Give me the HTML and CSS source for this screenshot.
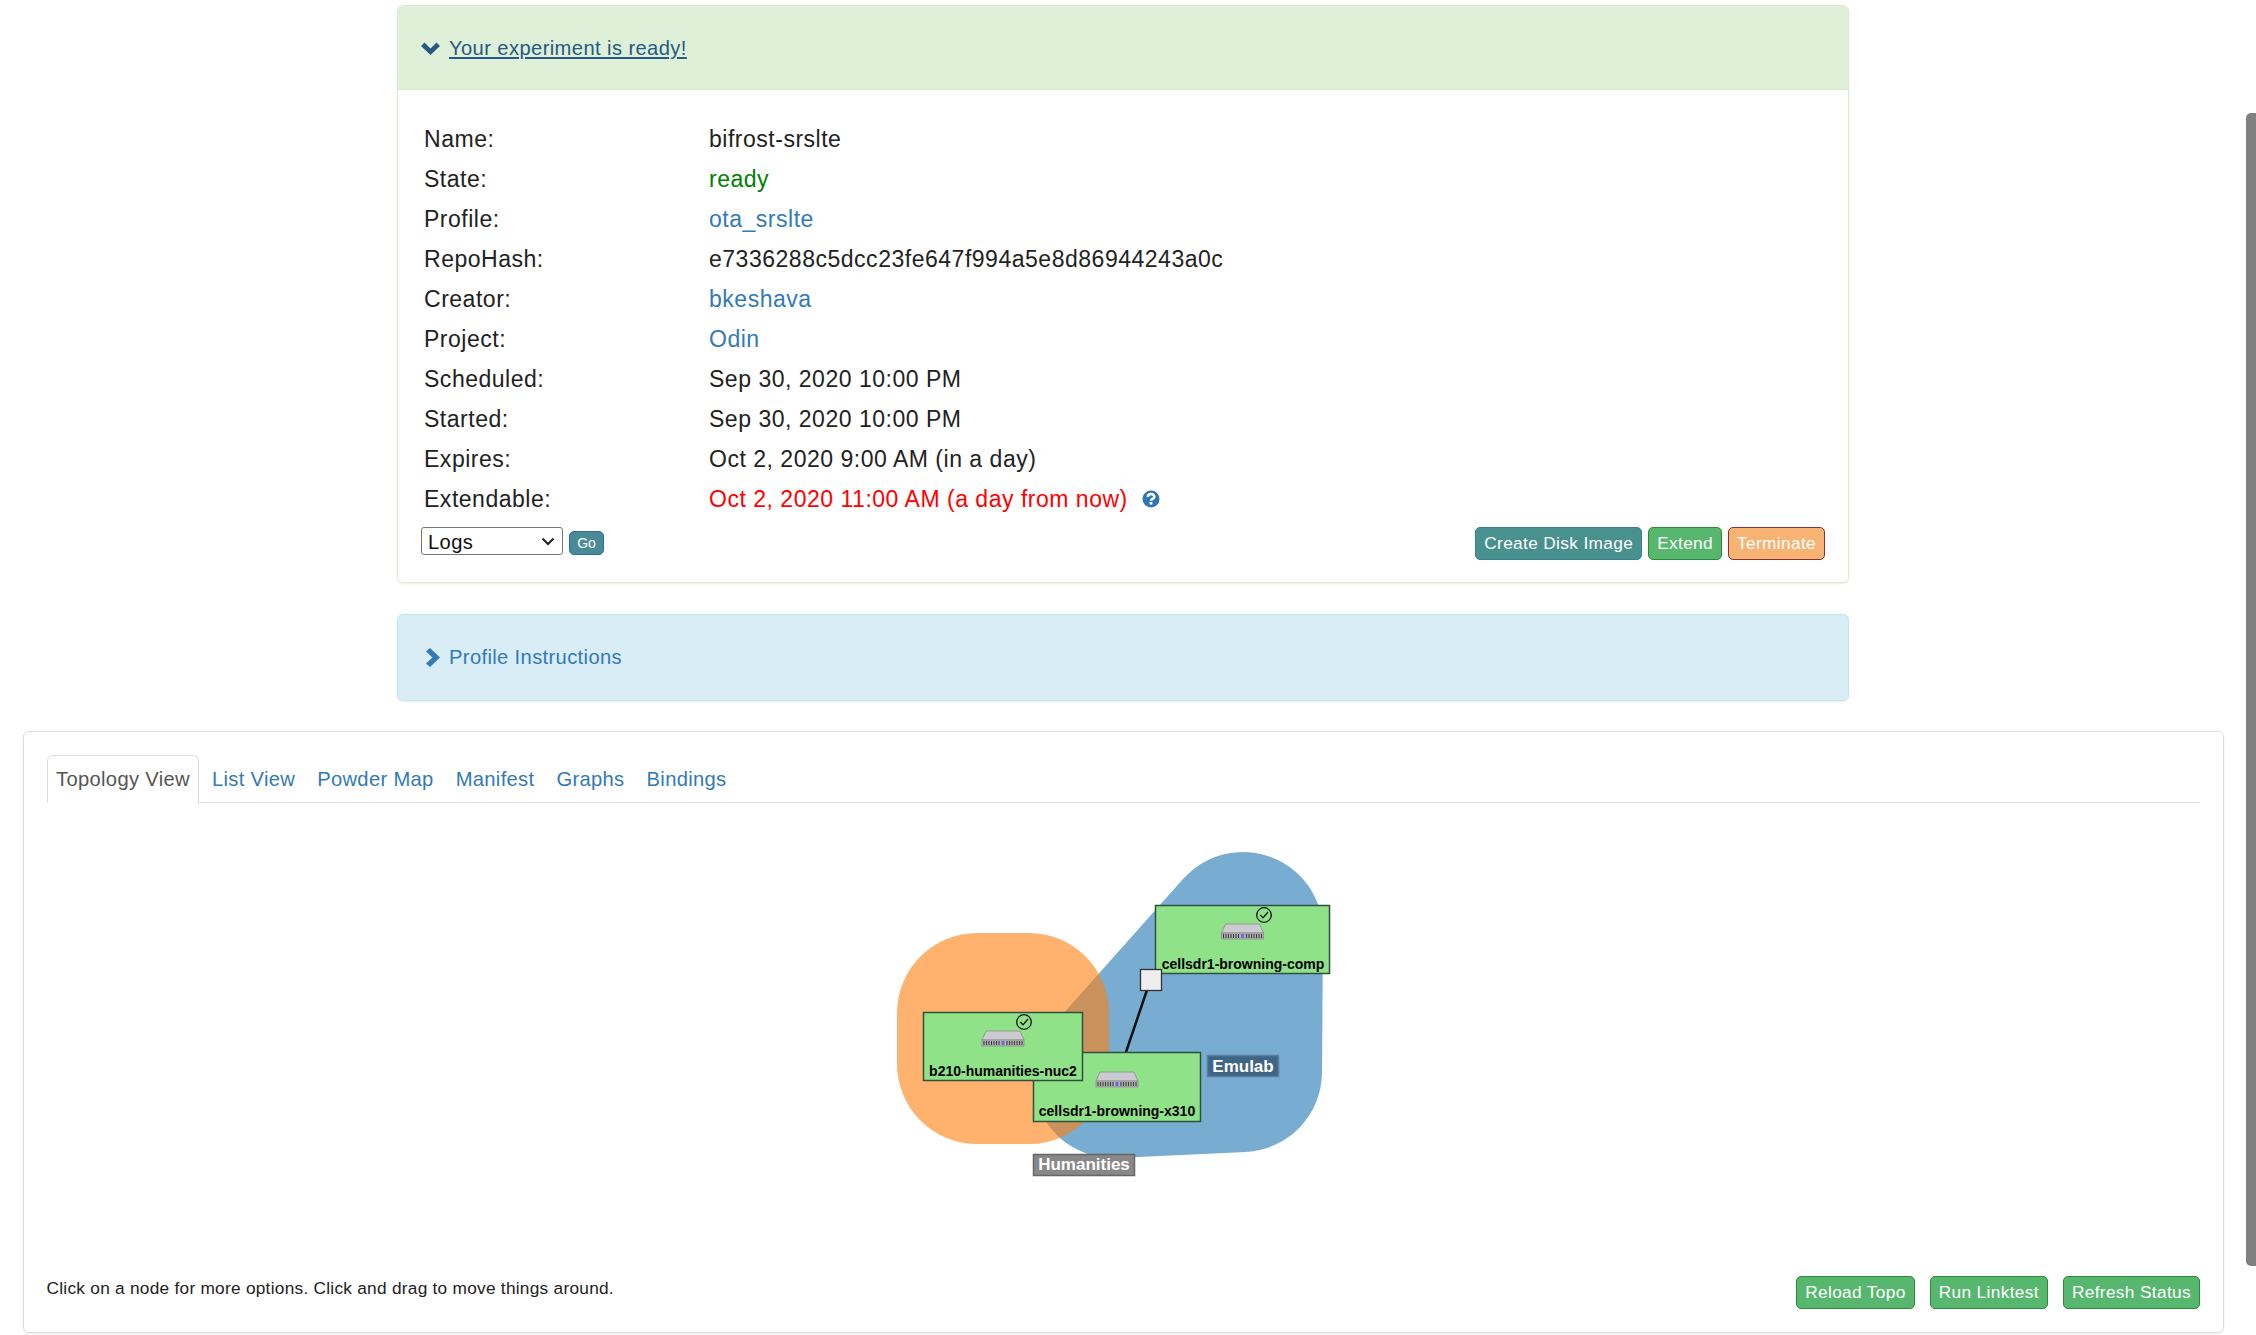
FILE: index.html
```html
<!DOCTYPE html>
<html lang="en">
<head>
<meta charset="utf-8">
<title>Experiment</title>
<link rel="stylesheet" href="styles.css">
</head>
<body>
<div class="page">
  <section class="panel panel-ready">
    <div class="panel-head head-ready">
      <svg class="chev-down" viewBox="0 0 19 13"><path d="M0 4 L3.500 .5 L9.500 6.500 L15.500 .5 L19 4 L9.500 13 Z" fill="#245a83"/></svg>
      <a class="head-link" href="#">Your experiment is ready!</a>
    </div>
    <div class="panel-body">
      <div class="info">
        <span>Name:</span><span>bifrost-srslte</span>
        <span>State:</span><span class="ok">ready</span>
        <span>Profile:</span><span><a href="#">ota_srslte</a></span>
        <span>RepoHash:</span><span>e7336288c5dcc23fe647f994a5e8d86944243a0c</span>
        <span>Creator:</span><span><a href="#">bkeshava</a></span>
        <span>Project:</span><span><a href="#">Odin</a></span>
        <span>Scheduled:</span><span>Sep 30, 2020 10:00 PM</span>
        <span>Started:</span><span>Sep 30, 2020 10:00 PM</span>
        <span>Expires:</span><span>Oct 2, 2020 9:00 AM (in a day)</span>
        <span>Extendable:</span><span class="warn-row"><span class="warn">Oct 2, 2020 11:00 AM (a day from now)</span>
          <svg class="help" viewBox="0 0 18 18"><circle cx="9" cy="9" r="8.500" fill="#2f74b5"/><path d="M5.800 7 C5.900 3 12.300 3 12.300 6.800 C12.300 9.200 9 8.600 9 10.800" fill="none" stroke="#fff" stroke-width="2.600"/><rect x="7.600" y="12" width="2.800" height="2.600" fill="#fff"/></svg></span>
      </div>
      <div class="actions">
        <div class="actions-left">
          <div class="fake-select">Logs<svg class="sel-arrow" viewBox="0 0 14 9"><path d="M1.500 1.500 L7 7 L12.500 1.500" fill="none" stroke="#222" stroke-width="2"/></svg></div>
          <button class="btn btn-go">Go</button>
        </div>
        <div class="actions-right">
          <button class="btn btn-info">Create Disk Image</button>
          <button class="btn btn-success">Extend</button>
          <button class="btn btn-warning">Terminate</button>
        </div>
      </div>
    </div>
  </section>

  <section class="panel panel-profile">
    <div class="head-profile">
      <svg class="chev-right" viewBox="0 0 14 19"><path d="M4 0 L14 9.500 L4 19 L0 15.500 L6.500 9.500 L0 3.500 Z" fill="#337ab7"/></svg>
      <a class="profile-link" href="#">Profile Instructions</a>
    </div>
  </section>

  <section class="topo">
    <nav class="tabs">
      <a class="tab active" href="#">Topology View</a>
      <a class="tab" href="#">List View</a>
      <a class="tab" href="#">Powder Map</a>
      <a class="tab" href="#">Manifest</a>
      <a class="tab" href="#">Graphs</a>
      <a class="tab" href="#">Bindings</a>
    </nav>
    <svg class="diagram" viewBox="47 803 2153 473">
      <defs>
        <g id="server">
          <path d="M-17 -7 H17 L21 2 H-21 Z" fill="#cbcbd1" stroke="#8d8d8d" stroke-width=".8"/>
          <rect x="-21" y="2" width="42" height="6" fill="#b4b4b4" stroke="#8d8d8d" stroke-width=".8"/>
          <path d="M-19 3 V7 M-16.500 3 V7 M-14 3 V7 M-11.500 3 V7 M-9 3 V7 M-6.500 3 V7 M-4 3 V7 M4 3 V7 M6.500 3 V7 M9 3 V7 M11.500 3 V7 M14 3 V7 M16.500 3 V7 M19 3 V7" stroke="#3a3a3a" stroke-width="1.100"/>
          <rect x="-1.500" y="3" width="3" height="4" fill="#6a6ae0"/>
        </g>
        <g id="ok">
          <circle r="7.300" fill="none" stroke="#111" stroke-width="1.300"/>
          <path d="M-3.800 0 L-1 2.800 L4 -3" fill="none" stroke="#111" stroke-width="1.300"/>
        </g>
      </defs>
      <path class="hull-blue" d="M1243 932 L1242 1072 L1113 1078 Z"/>
      <rect class="hull-orange" x="897" y="933" width="212" height="211" rx="80"/>
      <line class="link" x1="1147" y1="990" x2="1126" y2="1052"/>
      <g>
        <rect class="node" x="1155.500" y="905.500" width="174" height="68"/>
        <use href="#server" x="1242.500" y="931"/>
        <use href="#ok" x="1264" y="915"/>
        <text class="node-label" x="1243" y="969">cellsdr1-browning-comp</text>
      </g>
      <g>
        <rect class="node" x="1033.500" y="1052.500" width="167" height="69"/>
        <use href="#server" x="1117" y="1079"/>
        <text class="node-label" x="1117" y="1116">cellsdr1-browning-x310</text>
      </g>
      <g>
        <rect class="node" x="923.500" y="1012.500" width="159" height="68"/>
        <use href="#server" x="1003" y="1038"/>
        <use href="#ok" x="1024" y="1022"/>
        <text class="node-label" x="1003" y="1076">b210-humanities-nuc2</text>
      </g>
      <rect class="iface" x="1140.500" y="969.500" width="21" height="21"/>
      <rect class="tag tag-blue" x="1207.500" y="1055.500" width="71" height="21"/>
      <text class="tag-label" x="1243" y="1072">Emulab</text>
      <rect class="tag tag-gray" x="1033.500" y="1154.500" width="101" height="21"/>
      <text class="tag-label" x="1084" y="1170">Humanities</text>
    </svg>
    <div class="topo-foot">
      <span class="hint">Click on a node for more options. Click and drag to move things around.</span>
      <div class="foot-btns">
        <button class="btn btn-success">Reload Topo</button>
        <button class="btn btn-success">Run Linktest</button>
        <button class="btn btn-success">Refresh Status</button>
      </div>
    </div>
  </section>
  <div class="scroll-thumb"></div>
</div>
</body>
</html>
```

FILE: styles.css
```css
html, body { margin: 0; padding: 0; height: 1335px; overflow: hidden; background: #fff; }
body { font-family: "Liberation Sans", Arial, sans-serif; color: #222; }
a { color: #337ab7; text-decoration: none; }
.page { position: relative; width: 2256px; height: 1335px; padding-top: 5px; box-sizing: border-box; }
.panel { width: 1452px; margin-left: 397px; box-sizing: border-box; border-radius: 6px; border: 1.5px solid; box-shadow: 0 1px 2px rgba(0,0,0,.08); }
.panel-ready { height: 578px; border-color: #dcebd0; }
.panel-head { height: 84px; display: flex; align-items: center; background: #dff0d8; border-radius: 5px 5px 0 0; border-bottom: 1px solid #d6e9c6; box-sizing: border-box; padding-left: 23px; padding-top: 1px; }
.chev-down { width: 19px; height: 13px; margin-right: 9px; }
.head-link { font-size: 20.16px; letter-spacing: .4px; color: #245a83; text-decoration: underline; }
.panel-body { padding: 29px 23px 0; }
.info { display: grid; grid-template-columns: 285px 1fr; grid-auto-rows: 40px; align-items: center; padding-left: 3px; font-size: 23.04px; letter-spacing: .5px; }
.ok { color: green; }
.warn { color: #f00; }
.warn-row { display: flex; align-items: center; }
.help { width: 18px; height: 18px; margin-left: 14px; }
.actions { display: flex; justify-content: space-between; margin-top: 8px; }
.actions-left { display: flex; gap: 6px; align-items: flex-start; }
.fake-select { width: 142px; height: 28px; box-sizing: border-box; border: 1px solid #767676; border-radius: 3px; font-size: 20.16px; letter-spacing: .4px; padding: 1px 7px 0 6px; line-height: 26px; display: flex; justify-content: space-between; align-items: center; background: #fff; color: #111; }
.sel-arrow { width: 14px; height: 9px; }
.actions-right { display: flex; gap: 6px; }
.btn { font-family: inherit; font-size: 17.28px; letter-spacing: .35px; color: #fff; border: 1px solid; border-radius: 5px; height: 33px; padding: 0 8px; box-sizing: border-box; white-space: nowrap; }
.btn-go { font-size: 14px; letter-spacing: 0; height: 24px; width: 35px; padding: 0; margin-top: 4px; background: #4a8a97; border-color: #2e6da4; }
.btn-info { background: #48918f; border-color: #367f94; }
.btn-success { background: #57b76f; border-color: #2b8a34; }
.btn-warning { background: #f7b374; border-color: #8f2f2f; }
.panel-profile { height: 87px; margin-top: 31px; background: #d9edf7; border-color: #bce8f1; }
.head-profile { height: 84px; display: flex; align-items: center; padding-left: 28px; }
.chev-right { width: 14px; height: 19px; margin-right: 9px; }
.profile-link { font-size: 20.16px; letter-spacing: .36px; }
.topo { width: 2201px; height: 602px; margin: 30px 0 0 23px; box-sizing: border-box; padding: 23px 23px 0 22.5px; border: 1.5px solid #ddd; border-radius: 6px; box-shadow: 0 1px 2px rgba(0,0,0,.08); display: flex; flex-direction: column; }
.tabs { display: flex; height: 48px; box-sizing: border-box; border-bottom: 1.5px solid #ddd; gap: 3px; font-size: 20.16px; letter-spacing: .33px; flex: none; }
.tab { padding: 0 8.5px; line-height: 46px; height: 48px; box-sizing: border-box; border: 1.5px solid transparent; border-bottom: 0; border-radius: 6px 6px 0 0; }
.tab.active { color: #555; border-color: #ddd; background: #fff; }
.diagram { display: block; width: 2153px; height: 473px; flex: none; }
.hull-blue { fill: #1f77b4; stroke: #1f77b4; stroke-width: 160; stroke-linejoin: round; opacity: .6; }
.hull-orange { fill: #ff7f0e; opacity: .6; }
.link { stroke: #111; stroke-width: 2.5; }
.node { fill: #90e288; stroke: #2f4f3f; stroke-width: 1.500; }
.node-label { font: bold 14px "Liberation Sans", Arial, sans-serif; fill: #000; text-anchor: middle; }
.iface { fill: #eee; stroke: #333; stroke-width: 1.300; }
.tag { stroke-width: 1.500; }
.tag-blue { fill: #3f6586; stroke: #5a7f9f; }
.tag-gray { fill: #888; stroke: #666; }
.tag-label { font: bold 17px "Liberation Sans", Arial, sans-serif; fill: #fff; text-anchor: middle; }
.topo-foot { display: flex; justify-content: space-between; align-items: flex-start; }
.hint { font-size: 17.28px; letter-spacing: .26px; line-height: 24px; }
.foot-btns { display: flex; gap: 15px; }
.scroll-thumb { position: absolute; right: 0; top: 113px; width: 10px; height: 1153px; border-radius: 5px 0 0 5px; background: #808080; }
```
